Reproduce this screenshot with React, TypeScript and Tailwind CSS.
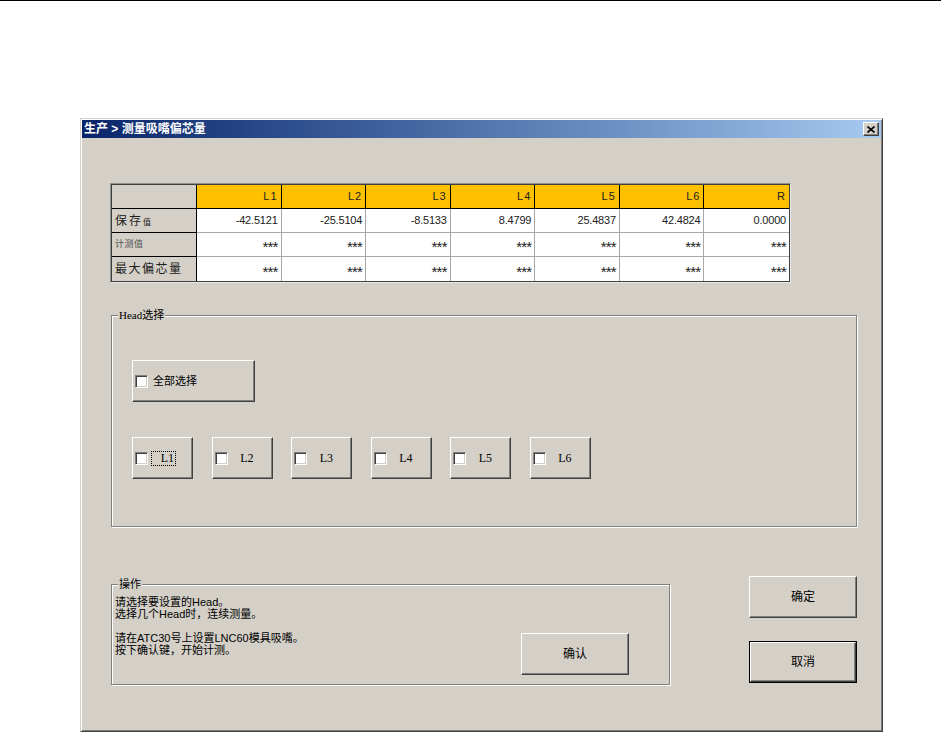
const sans = "font-['Liberation_Sans','Noto_Sans_CJK_SC',sans-serif]";
const serif = "font-['Liberation_Serif','Noto_Sans_CJK_SC',serif]";

const raised =
  "border border-t-white border-l-white border-r-[#404040] border-b-[#404040] shadow-[inset_-1px_-1px_0_#808080] bg-[#D4D0C8]";

const cols = ["L1", "L2", "L3", "L4", "L5", "L6", "R"];
const saved = ["-42.5121", "-25.5104", "-8.5133", "8.4799", "25.4837", "42.4824", "0.0000"];

function CheckBox() {
  return (
    <span className="block w-[13px] h-[13px] shrink-0 bg-white border border-t-[#808080] border-l-[#808080] border-r-white border-b-white shadow-[inset_1px_1px_0_#404040,inset_-1px_-1px_0_#D4D0C8]" />
  );
}

function Button({ label, isDefault }: { label: string; isDefault?: boolean }) {
  return (
    <div
      className={`w-[108px] h-[42px] ${isDefault ? "border border-black" : ""}`}
    >
      <div
        className={`${raised} w-full h-full flex items-center justify-center text-[12px] text-black ${sans}`}
      >
        {label}
      </div>
    </div>
  );
}

function HeadButton({ label, focused }: { label: string; focused?: boolean }) {
  return (
    <div className={`${raised} w-[61px] h-[42px] flex items-center pl-[2px]`}>
      <CheckBox />
      <span
        className={`ml-[3px] w-[25px] h-[15px] flex items-center justify-end pr-[1px] text-[12px] leading-none text-black ${serif} ${
          focused ? "border border-dotted border-black" : "border border-transparent"
        }`}
      >
        {label}
      </span>
    </div>
  );
}

function DataRow({
  label,
  values,
  stars,
}: {
  label: React.ReactNode;
  values: string[];
  stars?: boolean;
}) {
  return (
    <>
      <div className="h-[24px] bg-[#D4D0C8] border-r border-b border-black flex items-center pl-[3px]">
        {label}
      </div>
      {values.map((v, i) => (
        <div
          key={i}
          className={`h-[24px] bg-white border-b border-[#a8a8a8] flex items-center justify-end pr-[3px] text-[#202020] ${sans} ${
            stars ? "text-[15px] tracking-[-0.8px] pt-[6px]" : "text-[11px] tracking-[-0.2px]"
          } ${i < values.length - 1 ? "border-r" : ""}`}
        >
          {v}
        </div>
      ))}
    </>
  );
}

export default function App() {
  const stars = cols.map(() => "***");
  return (
    <div className="w-[941px] h-[732px] bg-white overflow-hidden">
      <div className="h-px bg-black" />

      {/* window */}
      <div className="ml-[80px] mt-[117px] w-[803px] h-[614px] bg-[#D4D0C8] p-px border border-t-[#D4D0C8] border-l-[#D4D0C8] border-r-[#404040] border-b-[#404040] shadow-[inset_1px_1px_0_#fff,inset_-1px_-1px_0_#808080]">
        {/* title bar */}
        <div className="h-[18px] bg-gradient-to-r from-[#0A246A] to-[#A6CAF0] flex items-center justify-between pl-[2px] pr-[2px]">
          <span className={`text-[12px] font-bold text-white leading-none ${sans}`}>
            生产 &gt; 测量吸嘴偏芯量
          </span>
          <div className={`${raised} w-[16px] h-[14px] flex items-center justify-center`}>
            <svg width="8" height="7" viewBox="0 0 8 7">
              <path d="M0.5 0.5 L7.5 6.5 M7.5 0.5 L0.5 6.5" stroke="#000" strokeWidth="1.6" />
            </svg>
          </div>
        </div>

        <div className="pl-[28px] pr-[24px] pt-[45px]">
          {/* table */}
          <div className="w-[681px] border border-t-[#909090] border-l-[#909090] border-r-[#e8e8e8] border-b-[#e8e8e8]">
            <div className="grid grid-cols-[85px_repeat(7,minmax(0,1fr))] border border-[#404040]">
              <div className="h-[24px] bg-[#D4D0C8] border-r border-b border-black" />
              {cols.map((c, i) => (
                <div
                  key={c}
                  className={`h-[24px] bg-[#FFC000] border-b border-black flex items-center justify-end pr-[3px] text-[11px] tracking-[1px] text-[#202020] ${sans} ${
                    i < cols.length - 1 ? "border-r" : ""
                  }`}
                >
                  {c}
                </div>
              ))}
              <DataRow
                label={
                  <span className={`flex items-end text-[12px] tracking-[2px] text-[#202020] ${sans}`}>
                    保存<span className="text-[8px] tracking-normal mb-[1px]">值</span>
                  </span>
                }
                values={saved}
              />
              <DataRow
                label={<span className={`text-[9px] tracking-[0.5px] text-[#505050] ${sans}`}>计测值</span>}
                values={stars}
                stars
              />
              <div className="contents [&>div]:border-b-0">
                <DataRow
                  label={<span className={`text-[12px] tracking-[1.5px] text-[#202020] ${sans}`}>最大偏芯量</span>}
                  values={stars}
                  stars
                />
              </div>
            </div>
          </div>

          {/* Head group */}
          <fieldset className="mt-[26px] w-[746px] h-[218px] ml-px border border-[#808080] shadow-[inset_1px_1px_0_#fff,1px_1px_0_#fff]">
            <legend className={`ml-[6px] px-px text-[11px] leading-[12px] text-black bg-[#D4D0C8] ${serif}`}>
              Head选择
            </legend>
            <div className="pl-[20px] pt-[39px]">
              <div className={`${raised} w-[123px] h-[42px] flex items-center pl-[2px]`}>
                <CheckBox />
                <span className={`ml-[5px] text-[11px] text-black ${sans}`}>全部选择</span>
              </div>
              <div className="mt-[35px] flex gap-[18.5px]">
                <HeadButton label="L1" focused />
                <HeadButton label="L2" />
                <HeadButton label="L3" />
                <HeadButton label="L4" />
                <HeadButton label="L5" />
                <HeadButton label="L6" />
              </div>
            </div>
          </fieldset>

          {/* bottom area */}
          <div className="mt-[49px] ml-px w-[746px] flex justify-between items-start">
            <fieldset className="mt-[2px] w-[559px] h-[107px] border border-[#808080] shadow-[inset_1px_1px_0_#fff,1px_1px_0_#fff] flex">
              <legend className={`ml-[6px] px-px text-[11px] leading-[12px] text-black bg-[#D4D0C8] ${sans}`}>
                操作
              </legend>
              <div className="flex w-full h-full">
                <div className={`pl-[3px] pt-[6px] text-[11px] leading-[12px] text-black ${sans}`}>
                  <div>请选择要设置的Head。</div>
                  <div>选择几个Head时，连续测量。</div>
                  <div className="h-[12px]" />
                  <div>请在ATC30号上设置LNC60模具吸嘴。</div>
                  <div>按下确认键，开始计测。</div>
                </div>
                <div className="ml-auto mr-[40px] self-end mb-[9px]">
                  <Button label="确认" />
                </div>
              </div>
            </fieldset>

            <div className="w-[108px] flex flex-col gap-[23px]">
              <Button label="确定" />
              <Button label="取消" isDefault />
            </div>
          </div>
        </div>
      </div>
    </div>
  );
}
